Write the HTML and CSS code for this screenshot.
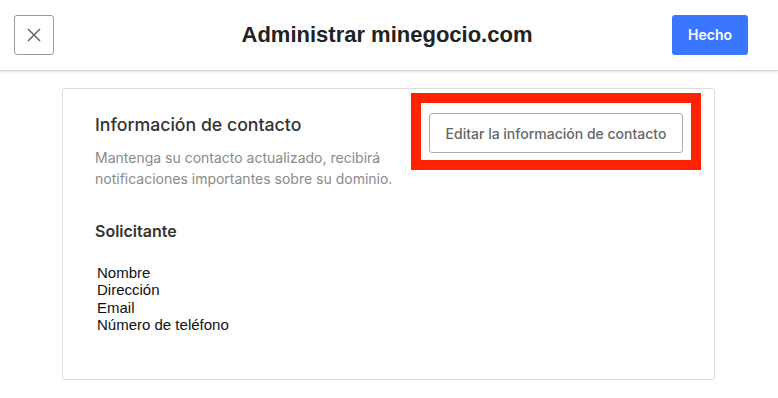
FILE: index.html
```html
<!DOCTYPE html>
<html lang="es">
<head>
<meta charset="utf-8">
<title>Administrar minegocio.com</title>
<link rel="stylesheet" href="styles.css">
</head>
<body>
<header class="topbar">
  <div class="bar-left">
    <button class="close-btn" aria-label="Cerrar">
      <svg width="14" height="14" viewBox="0 0 14 14"><path d="M1 1L13 13M13 1L1 13" stroke="#666" stroke-width="1.5" fill="none"/></svg>
    </button>
  </div>
  <h1 class="title">Administrar minegocio.com</h1>
  <div class="bar-right">
    <button class="done-btn">Hecho</button>
  </div>
</header>
<main class="content">
  <section class="card">
    <div class="card-top">
      <div class="intro">
        <h2 class="card-heading">Información de contacto</h2>
        <p class="card-desc">Mantenga su contacto actualizado, recibirá<br>notificaciones importantes sobre su dominio.</p>
      </div>
      <div class="edit-wrap">
        <button class="edit-btn">Editar la información de contacto</button>
        <span class="highlight"></span>
      </div>
    </div>
    <h3 class="sub-heading">Solicitante</h3>
    <ul class="fields">
      <li>Nombre</li>
      <li>Dirección</li>
      <li>Email</li>
      <li>Número de teléfono</li>
    </ul>
  </section>
</main>
</body>
</html>
```
FILE: styles.css
```css
* { box-sizing: border-box; }
html, body { margin: 0; padding: 0; background: #fff; }
body { font-family: Inter, "Liberation Sans", sans-serif; color: #333; }

.topbar {
  height: 71px;
  display: grid;
  grid-template-columns: 1fr auto 1fr;
  align-items: center;
  padding: 0 30px 1px 14px;
  border-bottom: 1px solid #d8d8d8;
  box-shadow: 0 1px 2px rgba(0,0,0,0.12);
}
.bar-left { display: flex; justify-content: flex-start; }
.bar-right { display: flex; justify-content: flex-end; }
.close-btn {
  width: 40px; height: 40px;
  border: 1px solid #9a9a9a;
  border-radius: 3px;
  background: #fff;
  display: flex; align-items: center; justify-content: center;
  padding: 0;
}
.title {
  margin: 0 0 0 12px;
  font-family: "Liberation Sans", Arial, sans-serif;
  font-weight: bold;
  font-size: 22px;
  color: #222;
}
.done-btn {
  width: 76px; height: 40px;
  border: none;
  border-radius: 3px;
  background: #3a76ff;
  color: #fff;
  font-family: Inter, sans-serif;
  font-weight: 600;
  font-size: 14px;
  padding: 0;
}

.content { padding: 17px 0 0 62px; }
.card {
  width: 653px;
  height: 292px;
  border: 1px solid #dcdcdc;
  border-radius: 3px;
  padding: 24px 31px 0 32px;
}
.card-top { display: flex; justify-content: space-between; align-items: flex-start; }
.card-heading {
  margin: 0;
  font-size: 17.7px;
  line-height: 24px;
  font-weight: 500;
  color: #333;
}
.card-desc {
  margin: 10px 0 0;
  font-size: 14px;
  line-height: 21px;
  color: #8a8a8a;
}
.edit-wrap { position: relative; }
.edit-btn {
  width: 254px; height: 40px;
  border: 1px solid #acacac;
  border-radius: 3px;
  background: #fff;
  color: #666;
  font-family: Inter, sans-serif;
  font-size: 14px;
  font-weight: 500;
  padding: 0;
}
.highlight {
  position: absolute;
  left: -18px; top: -20px;
  width: 290px; height: 77px;
  border: 10px solid #ff2200;
  pointer-events: none;
}
.sub-heading {
  margin: 31px 0 0;
  font-size: 16px;
  line-height: 22px;
  font-weight: 600;
  color: #333;
}
.fields {
  list-style: none;
  margin: 22px 0 0;
  padding: 0 0 0 2px;
  font-family: "Liberation Sans", Arial, sans-serif;
  font-size: 15px;
  line-height: 17.4px;
  color: #111;
}
```
